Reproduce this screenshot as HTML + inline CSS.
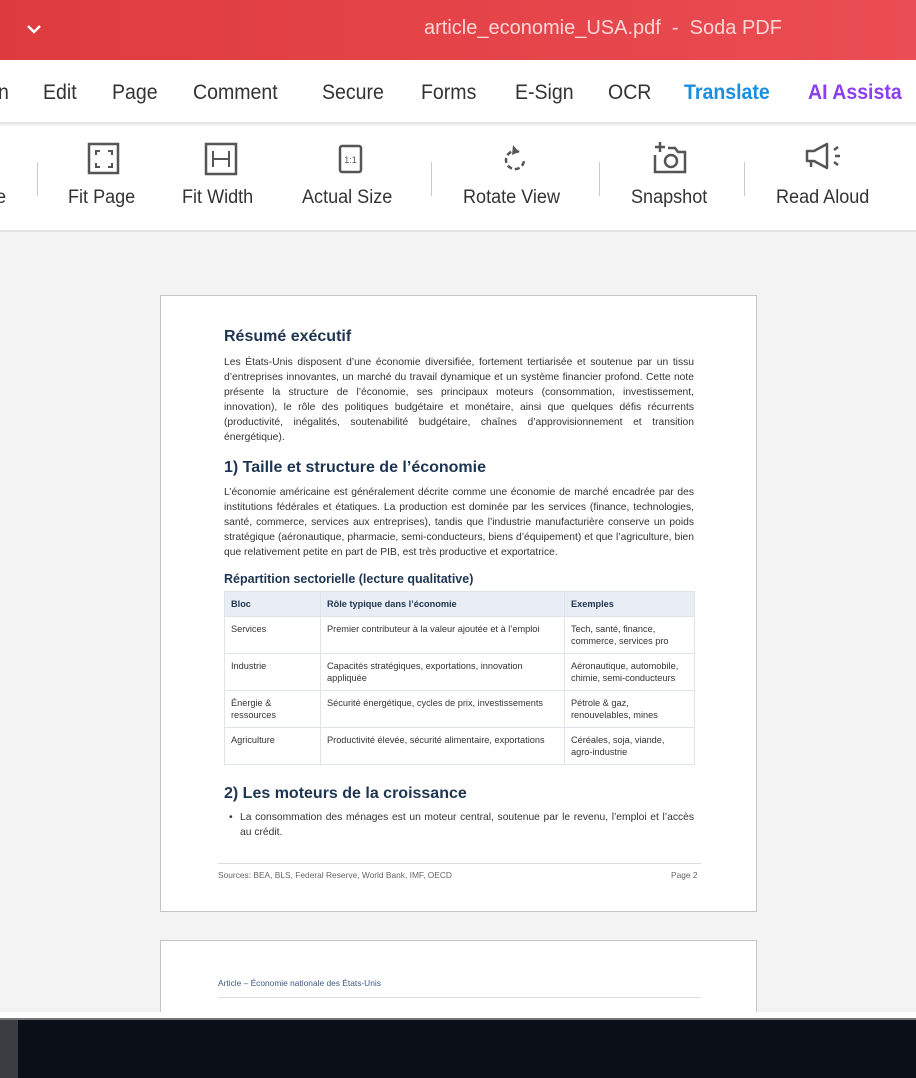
<!DOCTYPE html>
<html><head><meta charset="utf-8"><style>
*{margin:0;padding:0;box-sizing:border-box}
body{width:916px;height:1078px;overflow:hidden;background:#f3f3f3;font-family:"Liberation Sans",sans-serif;position:relative}
.abs{position:absolute}
.title{left:0;top:0;width:916px;height:60px;background:linear-gradient(90deg,#de3b3e,#ea4d53)}
.menu{left:0;top:60px;width:916px;height:64px;background:#fff;border-bottom:2px solid #e6e6e6}
.menu span{position:absolute;top:21px;font-size:21px;color:#333;transform:scaleX(.93);transform-origin:left}
.tb{left:0;top:126px;width:916px;height:106px;background:#fff;border-bottom:2px solid #e2e2e2}
.tb .l{position:absolute;top:61px;font-size:19px;color:#333;white-space:nowrap;transform:scaleX(.95);transform-origin:left}
.sep{position:absolute;top:36px;width:1px;height:34px;background:#ccc}
.page{background:#fff;border:1px solid #c4c4c4}
.p{font-size:10.3px;line-height:15px;color:#333;text-align:justify;text-align-last:left}
h2{font-size:16px;color:#1e3552;font-weight:bold}
h3{font-size:12.5px;color:#1e3552;font-weight:bold}
table{border-collapse:collapse;font-size:9.2px;color:#333;line-height:12px;table-layout:fixed}
td,th{border:1px solid #dfe4ea;vertical-align:top;padding:6px 6px;text-align:left}
th{background:#e8eef4;color:#1e3552;font-weight:bold;height:23px;padding:6px 6px}
</style></head><body>
<div class="abs title">
<svg class="abs" style="left:25px;top:22px" width="18" height="14"><path d="M3 4l6 6 6-6" stroke="#fff" stroke-width="2.5" fill="none"/></svg>
<div class="abs" style="left:424px;top:17px;font-size:20px;color:#fbd6d6;white-space:nowrap">article_economie_USA.pdf &nbsp;- &nbsp;Soda PDF</div>
</div>
<div class="abs menu">
<span style="left:-2px">n</span><span style="left:43px">Edit</span><span style="left:112px">Page</span><span style="left:193px">Comment</span><span style="left:322px">Secure</span><span style="left:421px">Forms</span><span style="left:515px">E-Sign</span><span style="left:608px">OCR</span><span style="left:684px;color:#1a8ee0;font-weight:bold">Translate</span><span style="left:808px;color:#8b3ff0;font-weight:bold">AI Assista</span>
</div>
<div class="abs tb">
<div class="l" style="left:-4px">e</div>
<div class="sep" style="left:37px"></div>
<svg class="abs" style="left:87px;top:16px" width="34" height="34"><rect x="2" y="2" width="29" height="29" fill="none" stroke="#555" stroke-width="2.5"/><path d="M9 13V9h4M21 9h4v4M25 21v4h-4M13 25H9v-4" stroke="#555" stroke-width="2" fill="none"/></svg>
<div class="l" style="left:68px">Fit Page</div>
<svg class="abs" style="left:204px;top:16px" width="34" height="34"><rect x="2" y="2" width="30" height="30" fill="none" stroke="#555" stroke-width="2.5"/><path d="M9 9v16M25 9v16M9 17h16" stroke="#555" stroke-width="2" fill="none"/></svg>
<div class="l" style="left:182px">Fit Width</div>
<svg class="abs" style="left:338px;top:18px" width="26" height="30"><rect x="2" y="2" width="21" height="26" rx="2" fill="none" stroke="#555" stroke-width="2.5"/><text x="12.5" y="19" font-size="9" text-anchor="middle" fill="#555" font-family="Liberation Sans">1:1</text></svg>
<div class="l" style="left:302px">Actual Size</div>
<div class="sep" style="left:431px"></div>
<svg class="abs" style="left:500px;top:16px" width="30" height="34"><path d="M19 10a9 9 0 1 0 5 8" stroke="#555" stroke-width="2.5" fill="none" stroke-dasharray="5 3"/><path d="M13 3l6 7-7 3z" fill="#555"/></svg>
<div class="l" style="left:463px">Rotate View</div>
<div class="sep" style="left:599px"></div>
<svg class="abs" style="left:652px;top:14px" width="38" height="36"><path d="M8 2v10M3 7h10" stroke="#555" stroke-width="2.5"/><path d="M3 15v17h30V12h-7l-3-4h-7" stroke="#555" stroke-width="2.5" fill="none"/><circle cx="19" cy="21" r="6" stroke="#555" stroke-width="2.5" fill="none"/></svg>
<div class="l" style="left:631px">Snapshot</div>
<div class="sep" style="left:744px"></div>
<svg class="abs" style="left:804px;top:16px" width="40" height="32"><path d="M3 9h7l13-7v24l-13-7H3z" stroke="#555" stroke-width="2.5" fill="none" stroke-linejoin="round"/><path d="M7 19v6" stroke="#555" stroke-width="2.5"/><path d="M30 8l4-3M31 14h5M30 20l4 3" stroke="#555" stroke-width="2.5"/></svg>
<div class="l" style="left:776px">Read Aloud</div>
</div>

<div class="abs page" style="left:160px;top:295px;width:597px;height:617px">
<div class="abs" style="left:63px;top:32px;width:470px">
<h2>Résumé exécutif</h2>
<div class="p" style="margin-top:9px">Les États-Unis disposent d’une économie diversifiée, fortement tertiarisée et soutenue par un tissu d’entreprises innovantes, un marché du travail dynamique et un système financier profond. Cette note présente la structure de l’économie, ses principaux moteurs (consommation, investissement, innovation), le rôle des politiques budgétaire et monétaire, ainsi que quelques défis récurrents (productivité, inégalités, soutenabilité budgétaire, chaînes d’approvisionnement et transition énergétique).</div>
<h2 style="margin-top:14px">1) Taille et structure de l’économie</h2>
<div class="p" style="margin-top:8px">L’économie américaine est généralement décrite comme une économie de marché encadrée par des institutions fédérales et étatiques. La production est dominée par les services (finance, technologies, santé, commerce, services aux entreprises), tandis que l’industrie manufacturière conserve un poids stratégique (aéronautique, pharmacie, semi-conducteurs, biens d’équipement) et que l’agriculture, bien que relativement petite en part de PIB, est très productive et exportatrice.</div>
<h3 style="margin-top:12px">Répartition sectorielle (lecture qualitative)</h3>
<table style="margin-top:5px;width:471px">
<tr><th style="width:96px">Bloc</th><th style="width:244px">Rôle typique dans l’économie</th><th>Exemples</th></tr>
<tr style="height:36px"><td>Services</td><td>Premier contributeur à la valeur ajoutée et à l’emploi</td><td>Tech, santé, finance, commerce, services pro</td></tr>
<tr style="height:36px"><td>Industrie</td><td>Capacités stratégiques, exportations, innovation appliquée</td><td>Aéronautique, automobile, chimie, semi-conducteurs</td></tr>
<tr style="height:36px"><td>Énergie &amp; ressources</td><td>Sécurité énergétique, cycles de prix, investissements</td><td>Pétrole &amp; gaz, renouvelables, mines</td></tr>
<tr style="height:36px"><td>Agriculture</td><td>Productivité élevée, sécurité alimentaire, exportations</td><td>Céréales, soja, viande, agro-industrie</td></tr>
</table>
<h2 style="margin-top:20px">2) Les moteurs de la croissance</h2>
<div class="p" style="margin-top:7px;padding-left:16px;position:relative"><span style="position:absolute;left:5px">•</span>La consommation des ménages est un moteur central, soutenue par le revenu, l’emploi et l’accès au crédit.</div>
</div>
<div class="abs" style="left:57px;top:567px;width:483px;border-top:1px solid #dcdcdc"></div>
<div class="abs" style="left:57px;top:574px;font-size:8.4px;color:#666">Sources: BEA, BLS, Federal Reserve, World Bank, IMF, OECD</div>
<div class="abs" style="left:510px;top:574px;font-size:8.4px;color:#666">Page 2</div>
</div>

<div class="abs page" style="left:160px;top:940px;width:597px;height:80px">
<div class="abs" style="left:57px;top:37px;font-size:8.4px;color:#3d5a80">Article – Économie nationale des États-Unis</div>
<div class="abs" style="left:57px;top:56px;width:483px;border-top:1px solid #dcdcdc"></div>
</div>
<div class="abs" style="left:0;top:1012px;width:916px;height:6px;background:#fff"></div>
<div class="abs" style="left:0;top:1018px;width:916px;height:2px;background:#777"></div>
<div class="abs" style="left:0;top:1020px;width:916px;height:58px;background:#0a0f18"></div>
<div class="abs" style="left:0;top:1020px;width:18px;height:58px;background:#3a3d42"></div>
</body></html>
